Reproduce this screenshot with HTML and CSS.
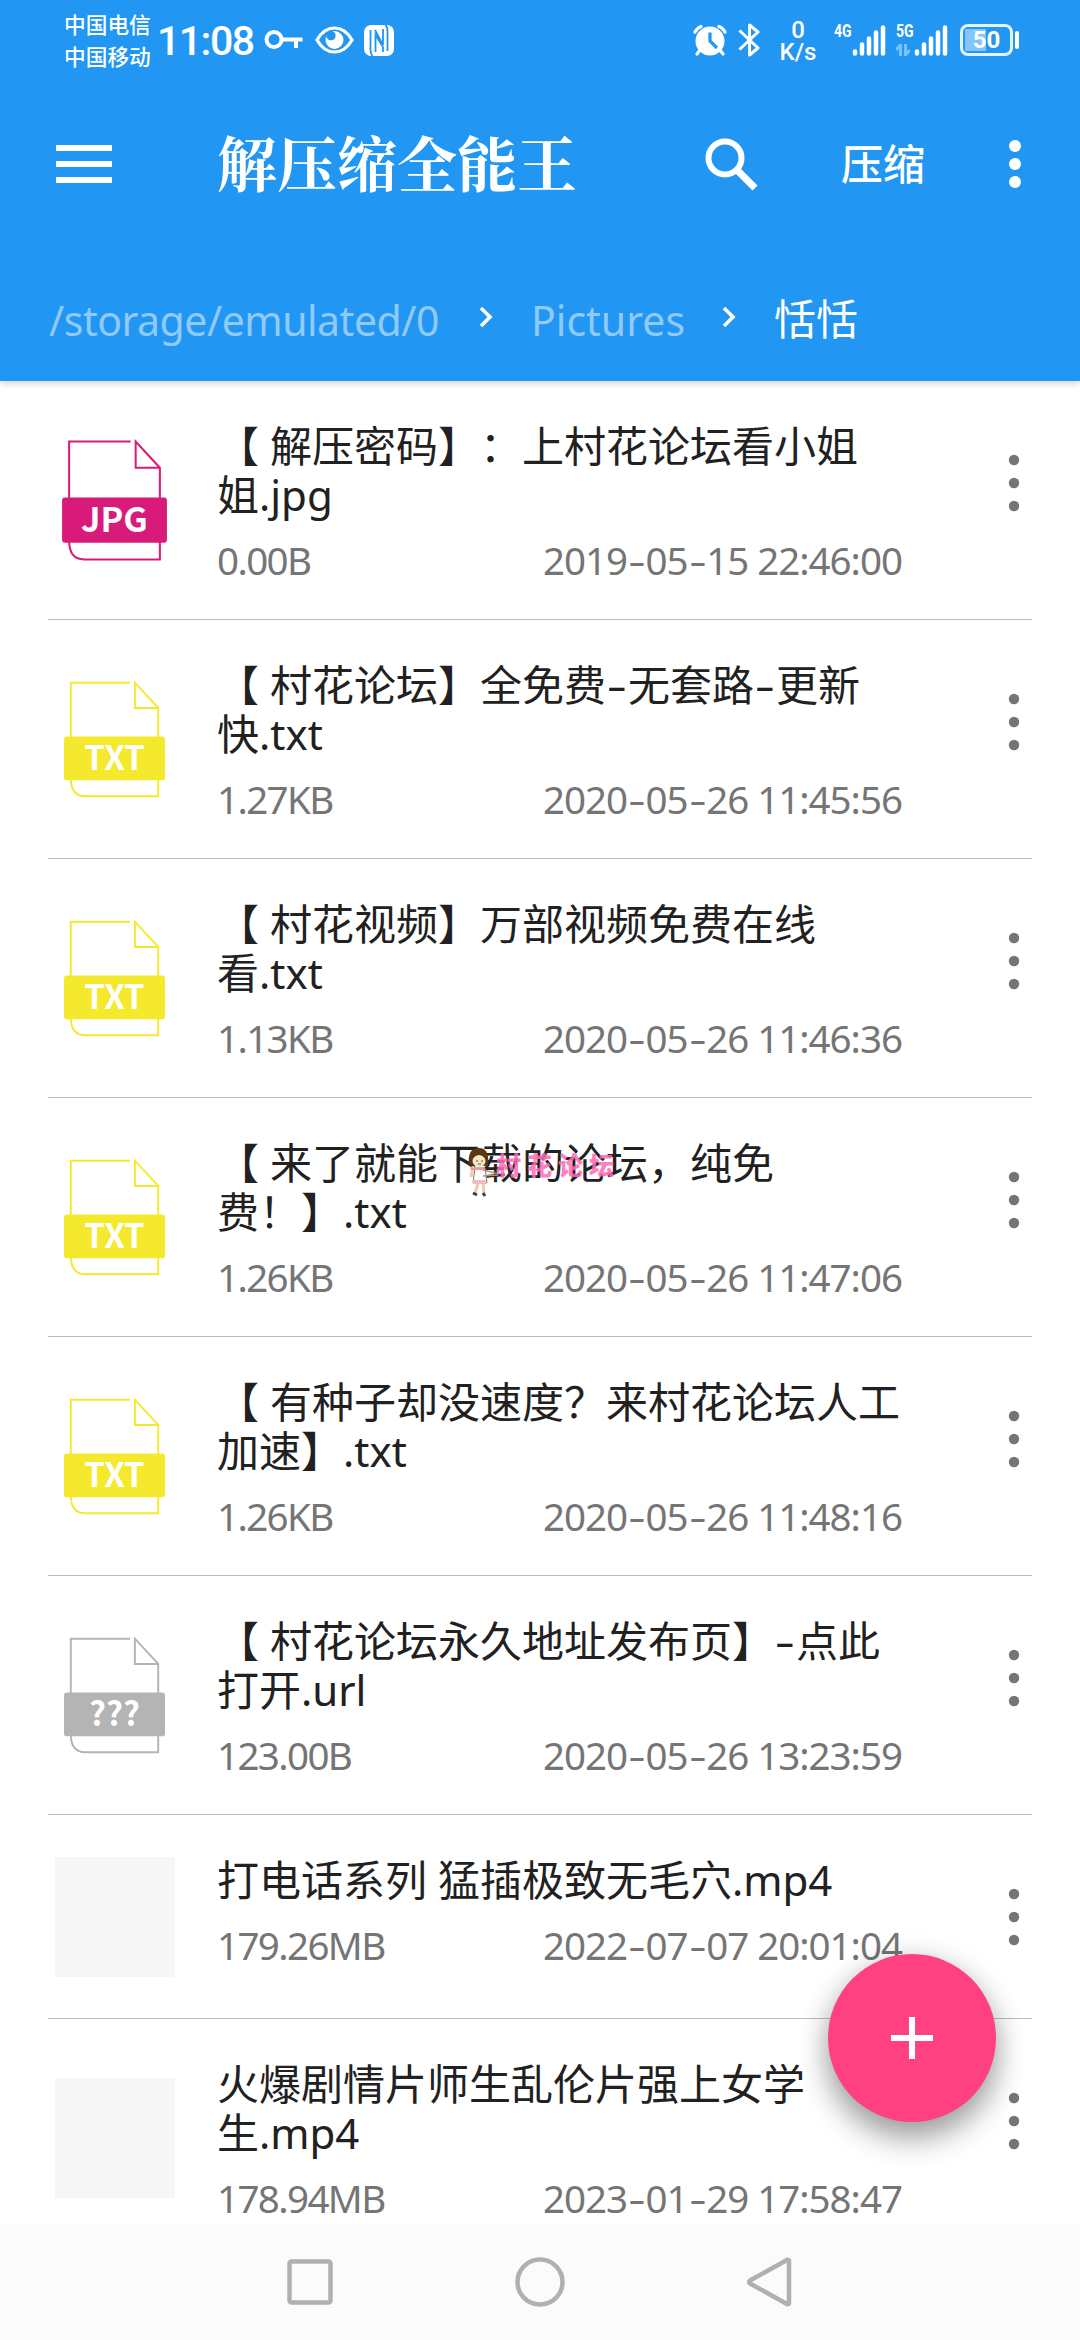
FILE: index.html
```html
<!DOCTYPE html>
<html lang="zh-CN">
<head>
<meta charset="utf-8">
<title>解压缩全能王</title>
<link rel="stylesheet" href="styles.css">
</head>
<body>
<svg class="defs" width="0" height="0">
  <symbol id="doc" viewBox="0 0 104 122">
    <path d="M68 2.500H7V101Q7 119.500 22 119.500H97V28.500L73 2.500V28.500H97" fill="none" stroke="currentColor" stroke-width="2"/>
    <rect x="0" y="58" width="104" height="45" rx="3" fill="currentColor"/>
  </symbol>
  <symbol id="more" viewBox="0 0 12 58">
    <circle cx="6" cy="6" r="5.200"/><circle cx="6" cy="29" r="5.200"/><circle cx="6" cy="52" r="5.200"/>
  </symbol>
  <symbol id="signal" viewBox="0 0 34 32">
    <path d="M3 29.500v-2M10 29.500v-9M17 29.500v-15M24 29.500v-21M31 29.500v-26" stroke="#fff" stroke-width="4.500" stroke-linecap="round"/>
  </symbol>
  <symbol id="chev" viewBox="0 0 14 22"><path d="M2 2l9 9-9 9" fill="none" stroke="#fff" stroke-width="3.600"/></symbol>
</svg>
<div class="screen">
  <header class="header">
    <div class="status">
      <div class="carriers"><span>中国电信</span><span>中国移动</span></div>
      <span class="clock">11:08</span>
      <svg class="key" width="39" height="20" viewBox="0 0 39 20" fill="none" stroke="#fff" stroke-width="4"><circle cx="10" cy="9.500" r="7.500"/><path d="M18 9.500H38.500M32 9.500V18"/></svg>
      <svg class="eye" width="39" height="28" viewBox="0 0 39 28"><path d="M2 14C11-2 28-2 37 14C28 30 11 30 2 14Z" fill="none" stroke="#fff" stroke-width="3.200"/><path d="M19.500 5a9 9 0 1 1-9 9c0-1.500.3-2.700.9-4a4.600 4.600 0 1 0 6-4.700z" fill="#fff"/></svg>
      <svg class="nfc" width="30" height="31" viewBox="0 0 30 31"><rect width="30" height="31" rx="7" fill="#fff"/><path d="M8.500 31Q6.500 29 6.500 25V5M21.500 0Q23.500 2 23.500 6V26M11.500 27V10L19 22V27M19 4V20L11 5" fill="none" stroke="#2196f3" stroke-width="1.800"/></svg>
      <svg class="alarm" width="34" height="32" viewBox="0 0 34 32"><circle cx="17" cy="17" r="14.500" fill="#fff"/><path d="M2 8Q4 4 8 2.500M32 8Q30 4 26 2.500M7 26l-3 4M27 26l3 4" stroke="#fff" stroke-width="3.200" stroke-linecap="round" fill="none"/><path d="M17 8.500V17l7 7" fill="none" stroke="#2196f3" stroke-width="3.200"/></svg>
      <svg class="bt" width="22" height="34" viewBox="0 0 22 34"><path d="M1.500 7.500L20 25l-8.500 7V2L20 9 1.500 26.500" fill="none" stroke="#fff" stroke-width="3" stroke-linejoin="round"/></svg>
      <div class="rate"><span>0</span><span>K/s</span></div>
      <div class="net"><span>4G</span></div>
      <svg width="34" height="32"><use href="#signal"/></svg>
      <div class="net net5"><span>5G</span><svg width="14" height="12" viewBox="0 0 14 12"><path d="M4.500 12V1L0 6M9.500 0v11L14 6" fill="none" stroke="#7cc3fb" stroke-width="3"/></svg></div>
      <svg width="34" height="32"><use href="#signal"/></svg>
      <div class="battery"><span>50</span></div>
      <b class="nub"></b>
    </div>
    <div class="toolbar">
      <svg width="56" height="38" viewBox="0 0 56 38"><path d="M0 3H56M0 19H56M0 35H56" stroke="#fff" stroke-width="6"/></svg>
      <h1>解压缩全能王</h1>
      <svg class="search" width="53" height="53" viewBox="0 0 53 53" fill="none" stroke="#fff"><circle cx="20" cy="20" r="16.500" stroke-width="6"/><path d="M31.500 31.500L50 50" stroke-width="7"/></svg>
      <span class="zip">压缩</span>
      <svg class="topmore" width="12" height="48" viewBox="0 0 12 48" fill="#fff"><circle cx="6" cy="6" r="6"/><circle cx="6" cy="24" r="6"/><circle cx="6" cy="42" r="6"/></svg>
    </div>
    <nav class="crumbs">
      <span class="c1">/storage/emulated/0</span>
      <svg width="14" height="22"><use href="#chev"/></svg>
      <span class="c2">Pictures</span>
      <svg width="14" height="22"><use href="#chev"/></svg>
      <span class="c3">恬恬</span>
    </nav>
  </header>

  <main class="list">
    <article class="row">
      <div class="icon jpg"><svg viewBox="0 0 104 122"><use href="#doc"/><text x="52" y="92">JPG</text></svg></div>
      <div class="info"><h2>【 解压密码】：上村花论坛看小姐<br>姐.jpg</h2><p><span>0.00B</span><time>2019<i>-</i>05<i>-</i>15 22:46:00</time></p></div>
      <svg class="more"><use href="#more"/></svg>
    </article>
    <article class="row">
      <div class="icon txt"><svg viewBox="0 0 104 122"><use href="#doc"/><text x="52" y="92">TXT</text></svg></div>
      <div class="info"><h2>【 村花论坛】全免费<i>-</i>无套路<i>-</i>更新<br>快.txt</h2><p><span>1.27KB</span><time>2020<i>-</i>05<i>-</i>26 11:45:56</time></p></div>
      <svg class="more"><use href="#more"/></svg>
    </article>
    <article class="row">
      <div class="icon txt"><svg viewBox="0 0 104 122"><use href="#doc"/><text x="52" y="92">TXT</text></svg></div>
      <div class="info"><h2>【 村花视频】万部视频免费在线<br>看.txt</h2><p><span>1.13KB</span><time>2020<i>-</i>05<i>-</i>26 11:46:36</time></p></div>
      <svg class="more"><use href="#more"/></svg>
    </article>
    <article class="row">
      <div class="icon txt"><svg viewBox="0 0 104 122"><use href="#doc"/><text x="52" y="92">TXT</text></svg></div>
      <div class="info"><h2>【 来了就能下载的论坛，纯免<br>费！】.txt</h2><p><span>1.26KB</span><time>2020<i>-</i>05<i>-</i>26 11:47:06</time></p></div>
      <svg class="more"><use href="#more"/></svg>
    </article>
    <article class="row">
      <div class="icon txt"><svg viewBox="0 0 104 122"><use href="#doc"/><text x="52" y="92">TXT</text></svg></div>
      <div class="info"><h2>【 有种子却没速度？来村花论坛人工<br>加速】.txt</h2><p><span>1.26KB</span><time>2020<i>-</i>05<i>-</i>26 11:48:16</time></p></div>
      <svg class="more"><use href="#more"/></svg>
    </article>
    <article class="row">
      <div class="icon unknown"><svg viewBox="0 0 104 122"><use href="#doc"/><text x="52" y="92">???</text></svg></div>
      <div class="info"><h2>【 村花论坛永久地址发布页】<i>-</i>点此<br>打开.url</h2><p><span>123.00B</span><time>2020<i>-</i>05<i>-</i>26 13:23:59</time></p></div>
      <svg class="more"><use href="#more"/></svg>
    </article>
    <article class="row short">
      <div class="thumb"></div>
      <div class="info"><h2>打电话系列 猛插极致无毛穴.mp4</h2><p><span>179.26MB</span><time>2022<i>-</i>07<i>-</i>07 20:01:04</time></p></div>
      <svg class="more"><use href="#more"/></svg>
    </article>
    <article class="row">
      <div class="thumb"></div>
      <div class="info"><h2>火爆剧情片师生乱伦片强上女学<br>生.mp4</h2><p><span>178.94MB</span><time>2023<i>-</i>01<i>-</i>29 17:58:47</time></p></div>
      <svg class="more"><use href="#more"/></svg>
    </article>
  </main>

  <footer class="navbar">
    <svg width="50" height="50" viewBox="0 0 50 50"><rect x="4.500" y="4.500" width="41" height="41" rx="2"/></svg>
    <svg width="50" height="50" viewBox="0 0 50 50"><circle cx="25" cy="25" r="22.500"/></svg>
    <svg width="50" height="50" viewBox="0 0 50 50"><path d="M44 3.500V46.500Q43 48 41 46.500L5 26.500Q3 25 5 23.500L41 3.500Q43 2 44 3.500Z"/></svg>
  </footer>

  <button class="fab"><svg width="42" height="42" viewBox="0 0 42 42"><path d="M21 0V42M0 21H42" stroke="#fff" stroke-width="6"/></svg></button>

  <div class="mark">
    <svg width="36" height="50" viewBox="0 0 36 50">
      <path d="M5 19L3 30M10 36l-3 11M15 36l1 10" stroke="#efc9b4" stroke-width="3" fill="none"/>
      <path d="M7 21h10l2 15H5z" fill="#fff" stroke="#8d7466" stroke-width="1"/>
      <path d="M5 33h13l1 4H5z" fill="#eebbc0"/>
      <path d="M15 23l16 4M15 29l15-1" stroke="#b58b79" stroke-width="1.300"/>
      <path d="M1 18Q-1 1 11 1Q22 1 20 19z" fill="#5b3711"/>
      <ellipse cx="11" cy="14" rx="6.500" ry="6" fill="#f7e5c3"/>
      <path d="M5 11Q11 4 17 11L15 7H7z" fill="#5b3711"/>
      <path d="M8 14h2M13 14h2M10 17h3" stroke="#75552f" stroke-width="1"/>
      <path d="M2 20q8 4 15-1v4H3z" fill="#ef929b"/>
      <path d="M5 46l4 2M15 46l2 3" stroke="#51382f" stroke-width="3"/>
    </svg>
    <span>村花论坛</span>
  </div>
</div>
</body>
</html>
```
FILE: styles.css
```css
* { box-sizing: border-box; margin: 0; padding: 0; }
body { background: #fff; font-family: "Noto Sans", "Noto Sans CJK SC", sans-serif; text-spacing-trim: space-all; }
svg { display: block; flex: none; }
i { font-style: normal; }
.defs { position: absolute; }
.screen { position: relative; width: 1080px; height: 2340px; overflow: hidden; display: flex; flex-direction: column; }

.header { position: relative; z-index: 1; flex: none; height: 381px; background: #2196f3; color: #fff; box-shadow: 0 2px 7px rgba(0,0,0,.2); }
.status { height: 80px; padding-left: 64px; display: flex; align-items: center; }
.carriers { width: 93px; display: flex; flex-direction: column; font: 500 21.700px/32px "Noto Sans CJK SC", sans-serif; }
.clock { width: 107px; padding-top: 2px; font: 500 41px/60px Roboto, sans-serif; letter-spacing: -1.500px; white-space: nowrap; }
.eye { margin-left: 12px; }
.nfc { margin-left: 10px; }
.alarm { margin-left: 299px; }
.bt { margin-left: 11px; }
.rate { width: 46px; margin-left: 15px; padding-top: 2px; display: flex; flex-direction: column; align-items: center; font: 500 24px/22px Roboto, sans-serif; }
.net { width: 18px; height: 32px; margin-left: 13px; display: flex; flex-direction: column; justify-content: space-between; }
.net span { font: 700 18px/14px "Roboto", sans-serif; transform: scaleX(.78); transform-origin: left; }
.net5 { margin-left: 10px; }
.battery { width: 53px; height: 32px; margin-left: 12px; border: 3px solid #e3f3ff; border-radius: 8px; background: linear-gradient(90deg, #85c5fa 21px, transparent 21px) 2px 2px / 43px 22px no-repeat; text-align: center; font: 700 24px/26px Roboto, sans-serif; }
.nub { width: 4px; height: 18px; margin-left: 2px; border-radius: 2px; background: #fff; }

.toolbar { height: 168px; padding-left: 56px; display: flex; align-items: center; }
h1 { width: 488px; margin-left: 105px; padding-bottom: 6px; font: 700 60px/80px "Noto Serif CJK SC", "Noto Serif SC", "Noto Sans CJK SC", serif; white-space: nowrap; }
.zip { width: 84px; margin-left: 83px; padding-bottom: 4px; font: 500 42px/60px "Noto Sans CJK SC", sans-serif; }
.topmore { margin-left: 84px; }

.crumbs { padding: 39px 0 0 49px; display: flex; align-items: center; font-size: 41px; line-height: 60px; color: #90caf9; }
.crumbs span { white-space: nowrap; }
.crumbs svg { position: relative; top: -3px; }
.c1 { width: 430px; letter-spacing: -.500px; }
.c2 { width: 191px; margin-left: 38px; }
.c3 { margin-left: 38px; padding-bottom: 5px; color: #fff; font-family: "Noto Sans CJK SC", sans-serif; font-size: 42px; font-weight: 400; }

.list { flex: 1; min-height: 0; overflow: hidden; padding: 0 48px; background: #fff; }
.row { height: 239px; border-bottom: 1px solid #bdbdbd; display: grid; grid-template-columns: 133px 743px 36px; column-gap: 36px; align-items: center; }
.row.short { height: 204px; }
.icon { justify-self: center; width: 101px; height: 119px; }
.icon.jpg { width: 105px; height: 123px; }
.icon svg { width: 100%; height: 100%; }
.icon text { fill: #fff; font: 700 34px "Noto Sans CJK SC", sans-serif; text-anchor: middle; }
.jpg { color: #d81b7a; }
.txt { color: #f5e92e; }
.unknown { color: #b4b4b4; }
.thumb { justify-self: center; width: 120px; height: 120px; background: #f6f6f6; }
.info { align-self: start; padding-top: 40px; }
h2 { font-size: 42px; line-height: 49px; font-weight: 400; color: #212121; white-space: nowrap; }
h2 i { display: inline-block; width: 22px; text-align: center; transform: scaleX(1.500); }
.info p { margin-top: 17px; display: grid; grid-template-columns: 326px auto; font-size: 38.500px; line-height: 49px; letter-spacing: -1px; color: #757575; white-space: nowrap; }
.info p span { letter-spacing: -1.600px; }
time i { display: inline-block; width: 18.500px; text-align: center; transform: scaleX(1.400); }
.more { width: 12px; height: 58px; margin-top: 73px; align-self: start; justify-self: center; fill: #757575; }

.navbar { flex: none; height: 116px; background: #fbfbfb; display: flex; justify-content: center; align-items: center; gap: 180px; }
.navbar svg { fill: none; stroke: #b0b0b0; stroke-width: 4.500; }

.fab { position: absolute; z-index: 2; left: 828px; top: 1954px; width: 168px; height: 168px; border: 0; border-radius: 50%; background: #ff4081; display: flex; align-items: center; justify-content: center; box-shadow: 0 18px 30px rgba(0,0,0,.3), 0 4px 30px rgba(0,0,0,.16); }
.mark { position: absolute; left: 468px; top: 1147px; display: flex; }
.mark span { margin-left: -8px; font: 900 25px/34px "Noto Sans CJK SC", sans-serif; letter-spacing: 6px; color: #ff69b4; opacity: .85; white-space: nowrap; }
```
